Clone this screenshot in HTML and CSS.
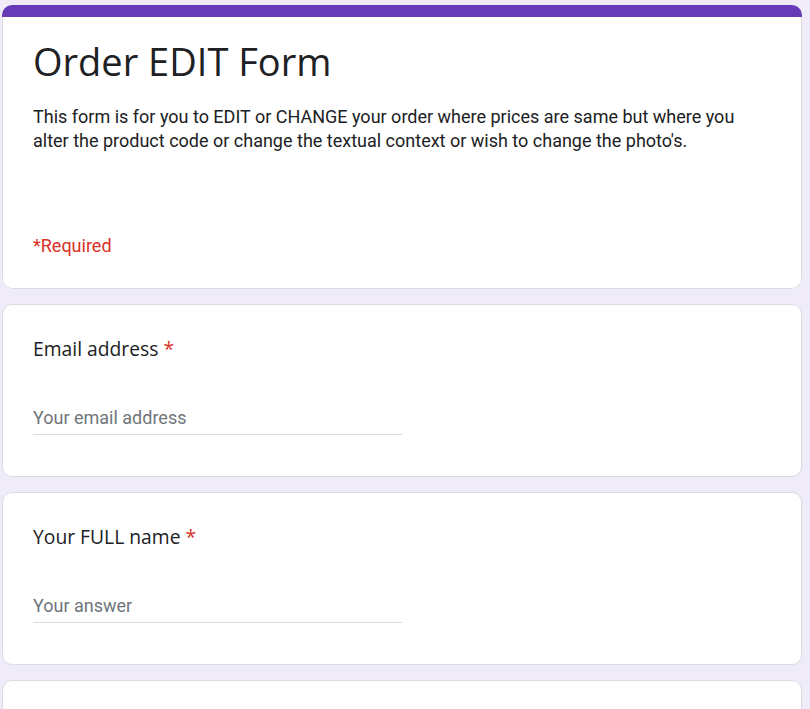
FILE: index.html
```html
<!DOCTYPE html>
<html lang="en">
<head>
<meta charset="utf-8">
<title>Order EDIT Form</title>
<link rel="stylesheet" href="styles.css">
</head>
<body>
<main class="form">
  <section class="card header-card">
    <div class="accent-bar"></div>
    <div class="header-body">
      <h1 class="form-title">Order EDIT Form</h1>
      <p class="form-desc">This form is for you to EDIT or CHANGE your order where prices are same but where you alter the product code or change the textual context or wish to change the photo's.</p>
      <p class="required-note">*Required</p>
    </div>
  </section>

  <section class="card question">
    <div class="q-label">Email address <span class="star">*</span></div>
    <div class="q-input"><span class="placeholder">Your email address</span></div>
  </section>

  <section class="card question">
    <div class="q-label">Your FULL name <span class="star">*</span></div>
    <div class="q-input"><span class="placeholder">Your answer</span></div>
  </section>

  <section class="card question"></section>
</main>
</body>
</html>
```
FILE: styles.css
```css
* { box-sizing: border-box; }
html, body { margin: 0; padding: 0; }
body {
  background: #f0ebf8;
  font-family: Roboto, "Liberation Sans", sans-serif;
  color: #202124;
  overflow: hidden;
  height: 709px;
}
.form {
  width: 800px;
  margin-left: 2px;
  padding-top: 5px;
  display: flex;
  flex-direction: column;
  gap: 15px;
}
.card {
  background: #fff;
  border: 1px solid #dadce0;
  border-radius: 10px;
}
.header-card {
  border: none;
  overflow: hidden;
}
.accent-bar {
  height: 12px;
  background: #673ab7;
}
.header-body {
  border: 1px solid #dadce0;
  border-top: none;
  border-radius: 0 0 10px 10px;
  padding: 20px 30px 31px;
}
.form-title {
  margin: 0;
  font-family: "Open Sans", sans-serif;
  font-weight: 400;
  font-size: 38px;
  line-height: 48px;
  color: #202124;
}
.form-desc {
  margin: 20px 0 0;
  font-size: 18px;
  line-height: 24px;
  color: #202124;
}
.required-note {
  margin: 81px 0 0;
  font-size: 18px;
  line-height: 23px;
  color: #d93025;
}
.question {
  padding: 29px 30px 41px;
  min-height: 173px;
}
.q-label {
  font-family: "Open Sans", sans-serif;
  font-size: 19.3px;
  line-height: 30px;
  color: #202124;
}
.star { color: #d93025; }
.q-input {
  margin-top: 42px;
  width: 369px;
  border-bottom: 1px solid #dadce0;
  padding-bottom: 5px;
}
.placeholder {
  font-size: 18px;
  line-height: 23px;
  color: #70757a;
}
```
